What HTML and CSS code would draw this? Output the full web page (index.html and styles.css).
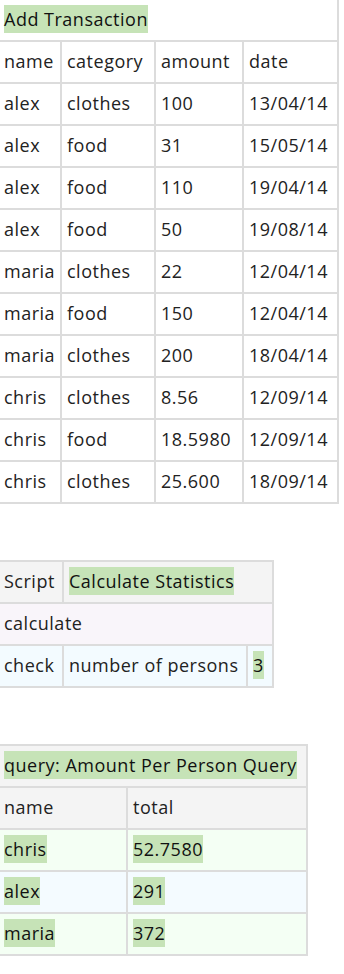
FILE: index.html
```html
<!DOCTYPE html>
<html>
<head>
<meta charset="utf-8">
<link rel="stylesheet" href="styles.css">
</head>
<body>
<div class="page">
  <table class="grid grid-tx">
    <colgroup><col class="c-name"><col class="c-cat"><col class="c-amt"><col class="c-date"></colgroup>
    <tr><td colspan="4" class="title-plain"><span class="hl">Add Transaction</span></td></tr>
    <tr><td>name</td><td>category</td><td>amount</td><td>date</td></tr>
    <tr><td>alex</td><td>clothes</td><td>100</td><td>13/04/14</td></tr>
    <tr><td>alex</td><td>food</td><td>31</td><td>15/05/14</td></tr>
    <tr><td>alex</td><td>food</td><td>110</td><td>19/04/14</td></tr>
    <tr><td>alex</td><td>food</td><td>50</td><td>19/08/14</td></tr>
    <tr><td>maria</td><td>clothes</td><td>22</td><td>12/04/14</td></tr>
    <tr><td>maria</td><td>food</td><td>150</td><td>12/04/14</td></tr>
    <tr><td>maria</td><td>clothes</td><td>200</td><td>18/04/14</td></tr>
    <tr><td>chris</td><td>clothes</td><td>8.56</td><td>12/09/14</td></tr>
    <tr><td>chris</td><td>food</td><td>18.5980</td><td>12/09/14</td></tr>
    <tr><td>chris</td><td>clothes</td><td>25.600</td><td>18/09/14</td></tr>
  </table>

  <table class="grid grid-script">
    <colgroup><col class="c-kw"><col class="c-label"><col class="c-val"></colgroup>
    <tr class="row-head"><td>Script</td><td colspan="2"><span class="hl">Calculate Statistics</span></td></tr>
    <tr class="row-action"><td colspan="3">calculate</td></tr>
    <tr class="row-check"><td>check</td><td>number of persons</td><td><span class="hl">3</span></td></tr>
  </table>

  <table class="grid grid-query">
    <colgroup><col class="c-qname"><col class="c-qtotal"></colgroup>
    <tr class="row-head"><td colspan="2"><span class="hl">query: Amount Per Person Query</span></td></tr>
    <tr class="row-head"><td>name</td><td>total</td></tr>
    <tr class="row-green"><td><span class="hl">chris</span></td><td><span class="hl">52.7580</span></td></tr>
    <tr class="row-blue"><td><span class="hl">alex</span></td><td><span class="hl">291</span></td></tr>
    <tr class="row-green"><td><span class="hl">maria</span></td><td><span class="hl">372</span></td></tr>
  </table>
</div>
</body>
</html>
```
FILE: styles.css
```css
html, body {
  margin: 0;
  padding: 0;
  background: #ffffff;
}

body {
  font-family: "Open Sans", Lato, sans-serif;
  font-size: 18px;
  letter-spacing: 0.5px;
  color: #222222;
}

.page {
  margin-left: -3px;
  margin-top: -2px;
}

.grid {
  border-collapse: separate;
  border-spacing: 0;
  table-layout: fixed;
  border-left: 2px solid #dcdcdc;
  border-top: 2px solid #dcdcdc;
  margin-bottom: 56px;
}

.grid td {
  box-sizing: border-box;
  border-right: 2px solid #dcdcdc;
  border-bottom: 2px solid #dcdcdc;
  padding: 5px 5px 7px 5px;
  line-height: 28px;
  height: 42px;
  white-space: nowrap;
  vertical-align: top;
}

.hl {
  display: inline-block;
  background: #c6e3b7;
  color: #111;
}

.grid-tx { width: 342px; }
.c-name { width: 63px; }
.c-cat { width: 94px; }
.c-amt { width: 88px; }
.c-date { width: 95px; }

.grid-script { width: 277px; }
.c-kw { width: 65px; }
.c-label { width: 184px; }
.c-val { width: 26px; }

.grid-query { width: 311px; }
.c-qname { width: 129px; }
.c-qtotal { width: 180px; }

.row-head td { background: #f4f4f4; }
.row-action td { background: #f9f5fa; }
.row-check td { background: #f3fbff; }
.row-green td { background: #f4fff4; }
.row-blue td { background: #f4fbff; }
```
